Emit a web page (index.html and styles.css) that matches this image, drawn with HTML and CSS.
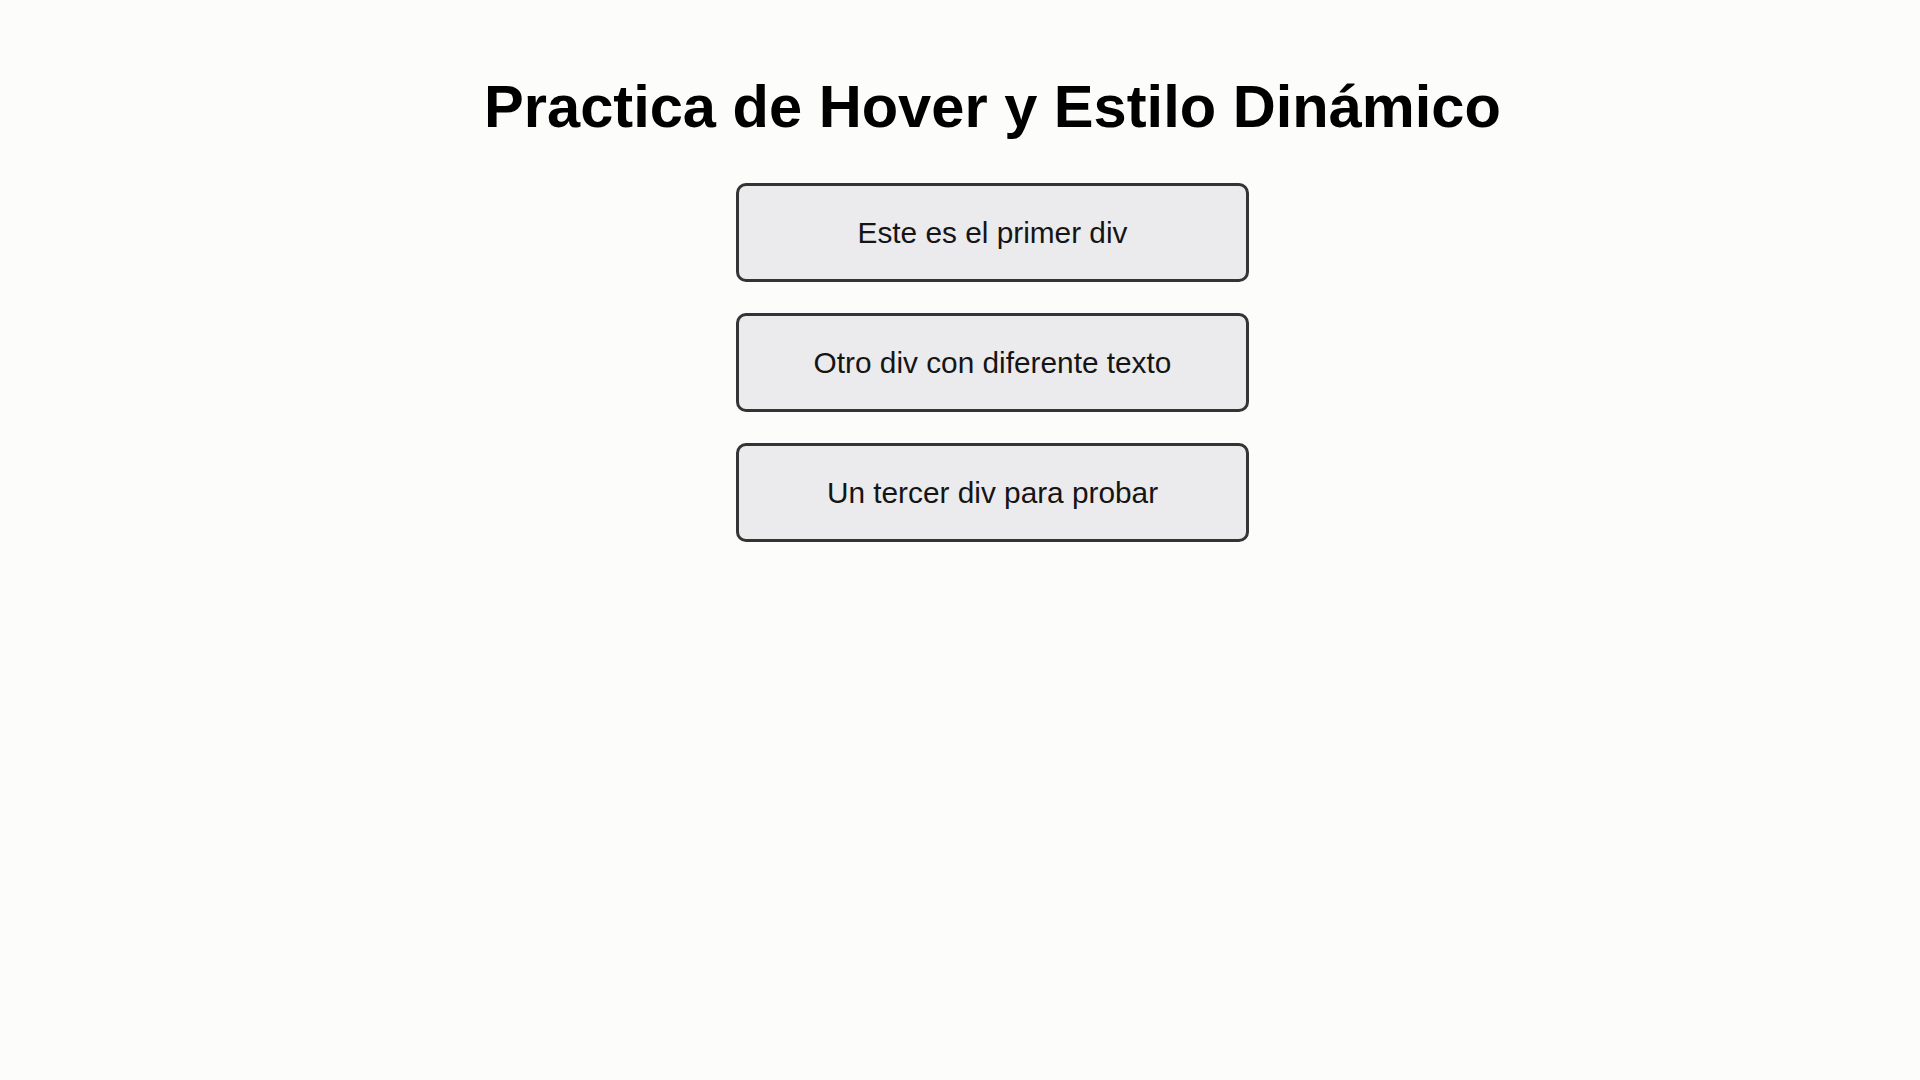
FILE: index.html
```html
<!DOCTYPE html>
<html lang="es">
<head>
<meta charset="utf-8">
<title>Practica de Hover y Estilo Dinámico</title>
<link rel="stylesheet" href="styles.css">
</head>
<body>
<main class="page">
  <h1 class="title">Practica de Hover y Estilo Dinámico</h1>
  <div class="list">
    <div class="card">Este es el primer div</div>
    <div class="card">Otro div con diferente texto</div>
    <div class="card">Un tercer div para probar</div>
  </div>
</main>
</body>
</html>
```

FILE: styles.css
```css
html, body {
  margin: 0;
  padding: 0;
  background: #fcfcfa;
}

body {
  font-family: "Liberation Sans", Arial, sans-serif;
  color: #111;
}

.page {
  display: flex;
  flex-direction: column;
  align-items: center;
  padding: 72px 0 0 65px;
  min-height: 100vh;
  box-sizing: border-box;
}

.title {
  margin: 0;
  font-size: 59.6px;
  font-weight: bold;
  line-height: normal;
  color: #000;
}

.list {
  margin-top: 42px;
  display: flex;
  flex-direction: column;
  gap: 31px;
}

.card {
  box-sizing: border-box;
  width: 513px;
  height: 99px;
  display: flex;
  align-items: center;
  justify-content: center;
  border: 3px solid #343434;
  border-radius: 10px;
  background: #ebebed;
  font-size: 29.8px;
  color: #151515;
}
```
